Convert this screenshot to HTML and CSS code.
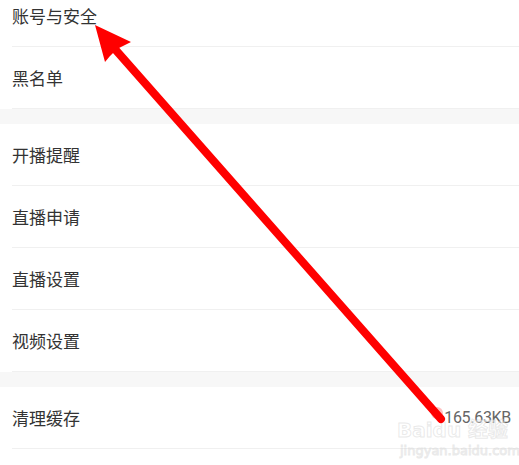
FILE: index.html
```html
<!DOCTYPE html>
<html>
<head>
	<meta charset="utf-8">
	<title>设置</title>
	<link rel="stylesheet" href="styles.css">
</head>
<body>
<div class="page">
	<div class="list first">
		<div class="row"><span class="label">账号与安全</span></div>
		<div class="row"><span class="label">黑名单</span></div>
	</div>
	<div class="gap"></div>
	<div class="list">
		<div class="row"><span class="label">开播提醒</span></div>
		<div class="row"><span class="label">直播申请</span></div>
		<div class="row"><span class="label">直播设置</span></div>
		<div class="row"><span class="label">视频设置</span></div>
	</div>
	<div class="gap"></div>
	<div class="list">
		<div class="row"><span class="label">清理缓存</span><span class="value">165.63KB</span></div>
	</div>

	<div class="watermark">
		<div class="wm-logo">Baidu 经验</div>
		<div class="wm-url">jingyan.baidu.com</div>
	</div>

	<svg class="arrow" width="519" height="465" viewBox="0 0 519 465">
		<line x1="441" y1="419" x2="114" y2="48" stroke="#ff0000" stroke-width="8" stroke-linecap="round"/>
		<polygon points="95,25 131,42 117,49 110,56 105,62" fill="#ff0000"/>
		<circle cx="437" cy="413" r="6" fill="#ff0000" opacity="0.25"/>
	</svg>
</div>
</body>
</html>
```

FILE: styles.css
```css
body{
	margin: 0;
	background: #fff;
	font-family: "Noto Sans CJK SC", "Noto Sans", sans-serif;
}
.page{
	position: relative;
	width: 519px;
	height: 465px;
	overflow: hidden;
}
.list.first{
	margin-top: -15px;
}
.row{
	height: 61px;
	margin-left: 12px;
	padding-right: 8px;
	border-bottom: 1px solid #f0f0f0;
	display: flex;
	align-items: center;
	justify-content: space-between;
}
.row .label{
	font-size: 17px;
	color: #333;
}
.row .value{
	font-family: Roboto, "Noto Sans", sans-serif;
	font-size: 16px;
	color: #666;
	letter-spacing: -0.3px;
}
.gap{
	height: 15px;
	background: #f7f7f7;
}
.arrow{
	position: absolute;
	left: 0;
	top: 0;
}
.watermark{
	position: absolute;
	left: 397px;
	top: 418px;
	white-space: nowrap;
	color: rgba(255, 255, 255, 0.5);
	font-family: "DejaVu Sans", "Noto Sans CJK SC", sans-serif;
	-webkit-text-stroke: 1px rgba(200, 200, 200, 0.4);
	pointer-events: none;
}
.watermark .wm-logo{
	font-size: 20px;
	font-weight: bold;
	line-height: 24px;
}
.watermark .wm-url{
	font-size: 13px;
	line-height: 18px;
	margin-left: 3px;
}
```
